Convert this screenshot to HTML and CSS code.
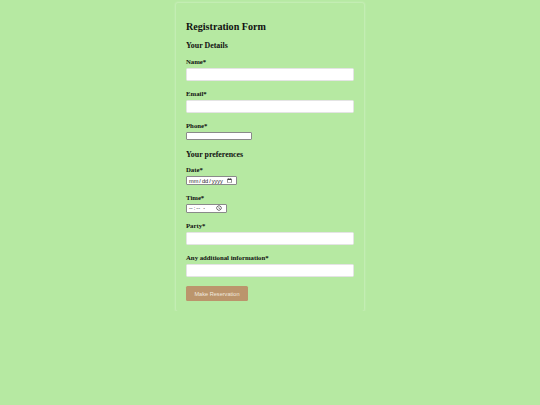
FILE: index.html
```html
<!DOCTYPE html>
<html>
<head>
<meta charset="utf-8">
<link rel="stylesheet" href="styles.css">
</head>
<body>
<form class="card">
  <h2 class="title">Registration Form</h2>
  <h3 class="section">Your Details</h3>
  <label class="field-label" for="name">Name*</label>
  <input class="wide" type="text" id="name">
  <label class="field-label" for="email">Email*</label>
  <input class="wide" type="email" id="email">
  <label class="field-label" for="phone">Phone*</label>
  <input class="plain phone" type="tel" id="phone">
  <h3 class="section section-2">Your preferences</h3>
  <label class="field-label" for="date">Date*</label>
  <input class="plain date" type="date" id="date">
  <label class="field-label" for="time">Time*</label>
  <input class="plain time" type="time" id="time">
  <label class="field-label" for="party">Party*</label>
  <input class="wide" type="text" id="party">
  <label class="field-label" for="info">Any additional information*</label>
  <input class="wide" type="text" id="info">
  <button class="submit" type="button">Make Reservation</button>
</form>
</body>
</html>
```

FILE: styles.css
```css
html {
  background: #b6e9a2;
}
body {
  margin: 0;
  font-family: "Liberation Serif", "Times New Roman", serif;
  color: #111;
}
.card {
  width: 168px;
  margin: 3px auto 0;
  padding: 17.5px 10px 10px;
  display: flex;
  flex-direction: column;
  align-items: flex-start;
  box-shadow: 0 0 2px 1px rgba(255, 255, 255, 0.25);
  border-radius: 2px;
}
.title {
  font-size: 10.1px;
  line-height: 12px;
  margin: 0 0 8px;
}
.section {
  font-size: 7.9px;
  line-height: 9px;
  margin: 0 0 8.5px;
}
.section-2 {
  margin-bottom: 7.5px;
}
.field-label {
  display: block;
  font-size: 6.75px;
  line-height: 7px;
  font-weight: bold;
  margin-bottom: 3px;
}
.wide {
  box-sizing: border-box;
  width: 168px;
  height: 13.4px;
  border: 0.5px solid #e4e4e4;
  border-radius: 1.5px;
  background: #fff;
  margin: 0 0 8.5px;
  padding: 0;
}
.plain {
  box-sizing: border-box;
  height: 8.6px;
  margin: 0 0 9px;
  padding: 0 1px;
  border: 0.8px solid #8a8a8a;
  border-radius: 1px;
  background: #fff;
  font-family: "Liberation Sans", Arial, sans-serif;
  font-size: 5.6px;
  color: #222;
}
.phone {
  width: 66px;
  margin-bottom: 9.5px;
}
.date {
  width: 51px;
}
.time {
  width: 41px;
  margin-bottom: 9.5px;
}
.submit {
  margin-top: 0.5px;
  width: 62px;
  height: 14.4px;
  padding: 0;
  border: none;
  border-radius: 1.5px;
  background: #bb956c;
  color: #f1e8df;
  font-family: "Liberation Sans", Arial, sans-serif;
  font-size: 5.6px;
}
```
